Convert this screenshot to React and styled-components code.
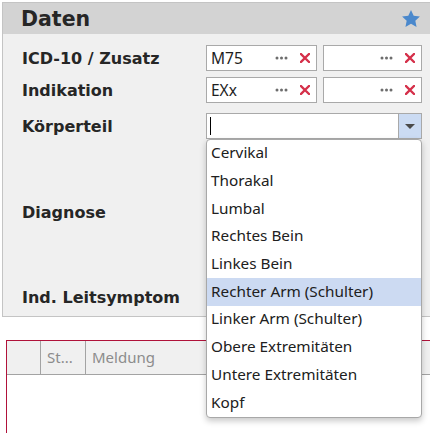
import React from "react";
import styled, { createGlobalStyle } from "styled-components";

const GlobalStyle = createGlobalStyle`
  html, body { margin: 0; padding: 0; background: #ffffff; overflow: hidden; }
  body { font-family: "Noto Sans", "DejaVu Sans", sans-serif; }
`;

const Page = styled.div`
  width: 430px;
  height: 433px;
  overflow: hidden;
  padding-top: 2px;
  box-sizing: border-box;
`;

const Panel = styled.section`
  margin-left: 2px;
  width: 450px;
  border: 1px solid #c4c4c4;
  background: #f0f0f0;
`;

const PanelHeader = styled.header`
  height: 31px;
  background: #d3d3d3;
  display: flex;
  align-items: center;
  padding-left: 18px;
  width: 428px;
  box-sizing: border-box;
  justify-content: space-between;
  padding-right: 11px;
`;

const Title = styled.h2`
  margin: 0;
  font-family: "DejaVu Sans", sans-serif;
  font-weight: bold;
  font-size: 20.5px;
  color: #262626;
`;

const Form = styled.div`
  display: grid;
  grid-template-columns: 184px 216px;
  row-gap: 6px;
  padding: 11px 0 6px 19px;
`;

const Label = styled.div`
  font-family: "DejaVu Sans", sans-serif;
  font-weight: bold;
  font-size: 16px;
  color: #262626;
  align-self: center;
  margin-top: ${(p) => (p.$spaced ? "4px" : "0")};
  padding-top: 1px;
`;

const FieldPair = styled.div`
  display: flex;
  gap: 6px;
`;

const Field = styled.div`
  box-sizing: border-box;
  width: ${(p) => p.$width}px;
  height: 26px;
  border: 1px solid #a9a9a9;
  background: #fff;
  display: flex;
  align-items: center;
  padding: 0 6px 0 4px;
`;

const FieldText = styled.span`
  flex: 1;
  font-size: 15.5px;
  color: #1e1e1e;
  padding-bottom: 1px;
`;

const DotsIcon = styled.svg`
  width: 13px;
  height: 4px;
  margin-right: 12px;
`;

const ClearIcon = styled.svg`
  width: 10px;
  height: 10px;
`;

const Combo = styled.div`
  position: relative;
  box-sizing: border-box;
  height: 26px;
  margin-top: 4px;
  border: 1px solid #a9a9a9;
  background: #fff;
  display: flex;
  align-items: stretch;
`;

const ComboInput = styled.div`
  flex: 1;
  display: flex;
  align-items: center;
  padding-left: 3px;
`;

const Caret = styled.span`
  width: 1px;
  height: 18px;
  background: #000;
`;

const ComboButton = styled.div`
  width: 22px;
  background: #cbdbf3;
  border-left: 1px solid #a9a9a9;
  display: flex;
  align-items: center;
  justify-content: center;
`;

const Arrow = styled.span`
  width: 0;
  height: 0;
  border-left: 5px solid transparent;
  border-right: 5px solid transparent;
  border-top: 5px solid #4a4a4a;
`;

const Dropdown = styled.ul`
  position: absolute;
  z-index: 10;
  top: 25px;
  left: -1px;
  width: 216px;
  box-sizing: border-box;
  margin: 0;
  padding: 0;
  list-style: none;
  background: #fff;
  border: 1px solid #a8a8a8;
  border-radius: 4px;
  box-shadow: 0 3px 6px rgba(0, 0, 0, 0.22);
  overflow: hidden;
`;

const Option = styled.li`
  height: 27.7px;
  box-sizing: border-box;
  display: flex;
  align-items: center;
  padding: 0 0 3px 4px;
  font-size: 15.3px;
  color: #202020;
  background: ${(p) => (p.$active ? "#ccdaf2" : "transparent")};
`;

const TextArea = styled.div`
  box-sizing: border-box;
  height: 133px;
  border: 1px solid #a9a9a9;
  background: #fff;
`;

const Input = styled.div`
  box-sizing: border-box;
  height: 26px;
  border: 1px solid #a9a9a9;
  background: #fff;
`;

const Grid = styled.div`
  margin: 23px 0 0 6px;
  width: 440px;
  height: 100px;
  border: 1px solid #b0123a;
  background: #fff;
`;

const GridHeader = styled.div`
  display: grid;
  grid-template-columns: 34px 45px 1fr;
  height: 33px;
  background: #f0f0f0;
  border-bottom: 1px solid #a3a3a3;
`;

const HeaderCell = styled.div`
  display: flex;
  align-items: center;
  padding: 0 0 2px 6px;
  border-right: ${(p) => (p.$divider ? "1px solid #a3a3a3" : "none")};
  font-size: 15px;
  color: #8c8c8c;
`;

const Dots = () => (
  <DotsIcon viewBox="0 0 13 4">
    <circle cx="2" cy="2" r="1.5" fill="#6d6d6d" />
    <circle cx="6.5" cy="2" r="1.5" fill="#6d6d6d" />
    <circle cx="11" cy="2" r="1.5" fill="#6d6d6d" />
  </DotsIcon>
);

const Clear = () => (
  <ClearIcon viewBox="0 0 10 10">
    <path d="M1 1L9 9M9 1L1 9" stroke="#d5304a" strokeWidth="2.3" strokeLinecap="square" />
  </ClearIcon>
);

const Star = () => (
  <svg width="18" height="17" viewBox="1 0.8 22 20.8">
    <path
      d="M12 0.8l3.3 7 7.6 0.9-5.6 5.2 1.5 7.6L12 17.7l-6.8 3.8 1.5-7.6L1.1 8.7l7.6-0.9z"
      fill="#4a88cc"
    />
  </svg>
);

const LookupField = ({ width, value }) => (
  <Field $width={width}>
    <FieldText>{value}</FieldText>
    <Dots />
    <Clear />
  </Field>
);

const options = [
  "Cervikal",
  "Thorakal",
  "Lumbal",
  "Rechtes Bein",
  "Linkes Bein",
  "Rechter Arm (Schulter)",
  "Linker Arm (Schulter)",
  "Obere Extremitäten",
  "Untere Extremitäten",
  "Kopf",
];

export default function App() {
  return (
    <>
      <GlobalStyle />
      <Page>
        <Panel>
          <PanelHeader>
            <Title>Daten</Title>
            <Star />
          </PanelHeader>
          <Form>
            <Label>ICD-10 / Zusatz</Label>
            <FieldPair>
              <LookupField width={111} value="M75" />
              <LookupField width={99} value="" />
            </FieldPair>
            <Label>Indikation</Label>
            <FieldPair>
              <LookupField width={111} value="EXx" />
              <LookupField width={99} value="" />
            </FieldPair>
            <Label $spaced>Körperteil</Label>
            <Combo>
              <ComboInput>
                <Caret />
              </ComboInput>
              <ComboButton>
                <Arrow />
              </ComboButton>
              <Dropdown>
                {options.map((o) => (
                  <Option key={o} $active={o === "Rechter Arm (Schulter)"}>
                    {o}
                  </Option>
                ))}
              </Dropdown>
            </Combo>
            <Label>Diagnose</Label>
            <TextArea />
            <Label>Ind. Leitsymptom</Label>
            <Input />
          </Form>
        </Panel>
        <Grid>
          <GridHeader>
            <HeaderCell $divider />
            <HeaderCell $divider>St...</HeaderCell>
            <HeaderCell>Meldung</HeaderCell>
          </GridHeader>
        </Grid>
      </Page>
    </>
  );
}
